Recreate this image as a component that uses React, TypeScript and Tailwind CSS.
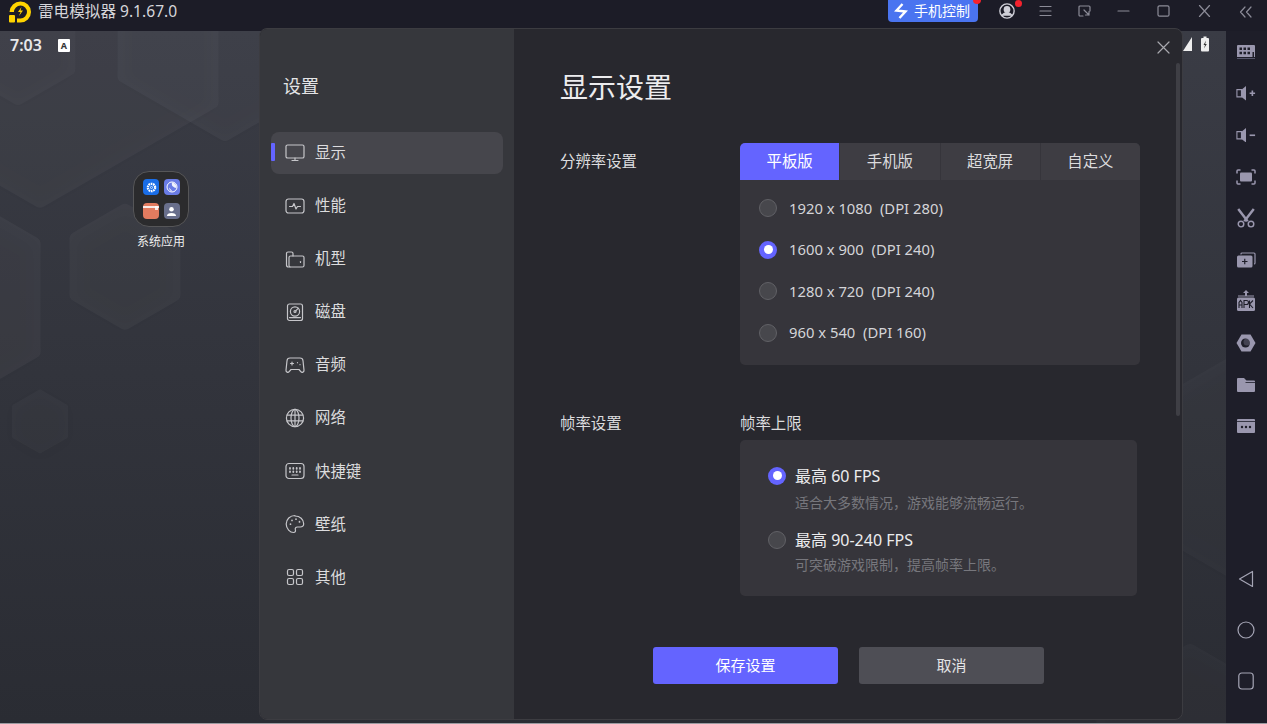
import React from "react";

const S = { fill: "none", stroke: "currentColor", strokeWidth: 1.2, strokeLinecap: "round", strokeLinejoin: "round" } as const;

const menuIcons: Record<string, React.ReactNode> = {
  monitor: (<g><rect x="1" y="2" width="18" height="13" rx="1.6" /><path d="M7 17.500h6M10 15v2.500" /></g>),
  perf: (<g><rect x="1" y="3" width="18" height="14" rx="2.500" /><path d="M4.500 10.500h3l1.500-3 2 5.500 1.500-2.500h3" /></g>),
  model: (<g><path d="M1.500 16V4.500A1.500 1.500 0 0 1 3 3h3.500A1.500 1.500 0 0 1 8 4.500V7" /><rect x="4" y="7" width="15" height="11" rx="1.500" /><path d="M1.500 16A2 2 0 0 0 3.500 18H5" /><path d="M15.500 12.500v1" /></g>),
  disk: (<g><rect x="2.500" y="2" width="15" height="16.500" rx="2" /><circle cx="10" cy="9.500" r="4.600" /><circle cx="10" cy="9.500" r="1" /><path d="M10.700 8.800l2.500-2.500M4.500 15.600h11" /></g>),
  game: (<g><path d="M5 3h10a3 3 0 0 1 3 2.700l1 9.500c.2 1.900-2 2.800-3.200 1.400L14 14.500H6l-1.800 2.100C3 18 .8 17.100 1 15.200l1-9.500A3 3 0 0 1 5 3z" /><path d="M5.500 8.500h3M7 7v3M12.500 7.500v.2M15 9.500v.2" /></g>),
  globe: (<g><circle cx="10" cy="10" r="8.600" /><ellipse cx="10" cy="10" rx="4" ry="8.600" /><path d="M2 7.200h16M2 12.800h16M10 1.400v17.200" /></g>),
  keys: (<g><rect x="1" y="2.500" width="18" height="15" rx="3" /><path d="M5 7v.8M8.300 7v.8M11.700 7v.8M15 7v.8M5 10.300v.8M8.300 10.300v.8M11.700 10.300v.8M15 10.300v.8" strokeWidth="1.800" /><path d="M7 14h6" /></g>),
  palette: (<g><path d="M10 1.500c-5 0-8.800 3.800-8.800 8.500 0 4.800 3.900 8.500 7.300 8.500 1.800 0 2.300-1.400 1.900-2.600-.6-1.600.3-2.900 2-2.900h2.800c2 0 3.500-1.200 3.500-3.200 0-4.400-3.800-7.800-8.700-7.800z" /><path d="M5.500 10v.2M7 6.300v.2M11 5v.2M14.500 7.700v.2" strokeWidth="1.700" /></g>),
  grid: (<g><rect x="2.500" y="2.500" width="6" height="6" rx="1.500" /><rect x="11.500" y="2.500" width="6" height="6" rx="1.500" /><rect x="2.500" y="11.500" width="6" height="6" rx="1.500" /><rect x="11.500" y="11.500" width="6" height="6" rx="1.500" /></g>),
};

const menu = [
  ["monitor", "显示"], ["perf", "性能"], ["model", "机型"], ["disk", "磁盘"], ["game", "音频"],
  ["globe", "网络"], ["keys", "快捷键"], ["palette", "壁纸"], ["grid", "其他"],
];

function Radio({ on }: { on?: boolean }) {
  return on ? (
    <span className="flex h-[18px] w-[18px] shrink-0 items-center justify-center rounded-full bg-[#6464ff]">
      <span className="h-[9px] w-[9px] rounded-full bg-white" />
    </span>
  ) : (
    <span className="h-[18px] w-[18px] shrink-0 rounded-full border border-[#616166] bg-[#47474c]" />
  );
}

function Hexes() {
  const hex = (cx: number, cy: number, r: number) => {
    const h = r * 0.866;
    return `${cx},${cy - r} ${cx + h},${cy - r / 2} ${cx + h},${cy + r / 2} ${cx},${cy + r} ${cx - h},${cy + r / 2} ${cx - h},${cy - r / 2}`;
  };
  const items: [number, number, number, number][] = [
    [225, 18, 116, 0.035],
    [40, 3, 198, 0.03],
    [18, 40, 58, 0.025],
    [-60, 298, 108, 0.035],
    [125, 267, 56, 0.03],
    [40, 422, 30, 0.025],
    [1260, 468, 120, 0.02],
    [1190, 752, 100, 0.02],
  ];
  return (
    <svg className="absolute inset-0 h-full w-full" viewBox="0 0 1226 693" preserveAspectRatio="none" aria-hidden>
      <defs>
        <filter id="soft" x="-30%" y="-30%" width="160%" height="160%"><feGaussianBlur stdDeviation="6" /></filter>
      </defs>
      {items.map(([cx, cy, r, o], i) => (
        <g key={i}>
          <polygon points={hex(cx, cy - 31 + 3, r)} fill="#000000" opacity={0.035} filter="url(#soft)" />
          <g opacity={o}>
            <polygon points={hex(cx, cy - 31, r)} fill="#ffffff" stroke="#ffffff" strokeWidth={r > 40 ? 14 : 4} strokeLinejoin="round" />
          </g>
        </g>
      ))}
    </svg>
  );
}

function TitleBar() {
  return (
    <header className="flex h-[31px] shrink-0 items-start bg-[#1c1c27] text-[#d5d5da]">
      <svg className="ml-[8px] mt-[1px] h-[22px] w-[24px] shrink-0" viewBox="0 0 24 22">
        <path d="M12.500 0.500a10.500 10.500 0 0 1 0 21H9v-4h3.500a6.500 6.500 0 1 0-6.500-6.500H1.500A11 11 0 0 1 12.500 0.500z" fill="#ffd400" />
        <rect x="1" y="14" width="6" height="7.500" rx="1" fill="#ffd400" />
        <path d="M13.500 6l-3.500 5h2.500l-1.500 4 4-5.500h-2.500z" fill="#ffd400" />
      </svg>
      <span className="ml-[6px] text-[15.600px] leading-[22px]">雷电模拟器 9.1.67.0</span>
      <div className="relative ml-auto flex h-[22px] w-[90px] items-center rounded-b-[4px] bg-[#4a74f0] pl-[6px] text-[14px] text-white">
        <svg className="h-[16px] w-[14px]" viewBox="0 0 14 16" fill="none" stroke="#fff" strokeWidth="2.400"><path d="M8.500 1L2.500 7.500l9 1L5.500 15" /></svg>
        <span className="ml-[6px] leading-[22px]">手机控制</span>
        <span className="absolute right-[-3px] top-[-4px] h-[8px] w-[8px] rounded-full bg-[#f5222d]" />
      </div>
      <div className="relative ml-[21px] mt-[3px] h-[16px] w-[16px]">
        <svg className="h-[16px] w-[16px]" viewBox="0 0 15 15" fill="none" stroke="#d0d0d8" strokeWidth="1.300"><circle cx="7.500" cy="7.500" r="6.700" /><circle cx="7.500" cy="6" r="2.500" fill="#d0d0d8" /><path d="M2.800 12c1-2 2.600-3 4.700-3s3.700 1 4.700 3" fill="#d0d0d8" /></svg>
        <span className="absolute right-[-7px] top-[-3px] h-[7px] w-[7px] rounded-full bg-[#f5222d]" />
      </div>
      <svg className="ml-[24px] mt-[5px] h-[12px] w-[13px] text-[#8c8c98]" viewBox="0 0 13 12" {...S}><path d="M1 1.500h11M1 6h11M1 10.500h11" /></svg>
      <svg className="ml-[26px] mt-[5px] h-[12px] w-[13px] text-[#8c8c98]" viewBox="0 0 13 12" {...S}><path d="M5 11H2a1 1 0 0 1-1-1V2a1 1 0 0 1 1-1h9a1 1 0 0 1 1 1v4M6 5l5 5M11 6.500V10H7.500" /></svg>
      <svg className="ml-[26px] mt-[5px] h-[12px] w-[13px] text-[#8c8c98]" viewBox="0 0 13 12" {...S}><path d="M1 6h11" /></svg>
      <svg className="ml-[27px] mt-[5px] h-[12px] w-[13px] text-[#8c8c98]" viewBox="0 0 13 12" {...S}><rect x="1" y="0.800" width="11" height="10.400" rx="1.500" /></svg>
      <svg className="ml-[28px] mt-[5px] h-[12px] w-[13px] text-[#8c8c98]" viewBox="0 0 13 12" {...S}><path d="M1.500 0.500l10 11M11.500 0.500l-10 11" /></svg>
      <svg className="ml-[28px] mr-[15px] mt-[6px] h-[12px] w-[13px] text-[#8c8c98]" viewBox="0 0 13 12" {...S}><path d="M6 1L1.500 6 6 11M12 1L7.500 6 12 11" /></svg>
    </header>
  );
}

function RightBar() {
  const c = "#9a97ae";
  const b = "#1e1e29";
  const icons = [
    <svg viewBox="0 0 20 16" key="k"><path d="M2 1h16a1 1 0 0 1 1 1v11H1V2a1 1 0 0 1 1-1z" fill={c} /><path d="M3.500 3.500h2.500v2.500H3.500zM7.500 3.500h2.500v2.500H7.500zM11.500 3.500h2.500v2.500h-2.500zM3.500 7.800h2.500v2.500H3.500zM7.500 7.800h2.500v2.500H7.500zM11.500 7.800h2.500v2.500h-2.500z" fill={b} /><path d="M16.500 8h1.500v5h-1.500z" fill={b} /><path d="M1 14h18v1H1z" fill="#55556a" /></svg>,
    <svg viewBox="0 0 22 16" key="v+"><path d="M1 4h5v8H1z" fill="none" stroke={c} strokeWidth="1.200" /><path d="M6 4l5-4v16l-5-4z" fill={c} /><path d="M15 8h6M18 5v6" stroke={c} strokeWidth="1.800" /></svg>,
    <svg viewBox="0 0 22 16" key="v-"><path d="M1 4h5v8H1z" fill="none" stroke={c} strokeWidth="1.200" /><path d="M6 4l5-4v16l-5-4z" fill={c} /><path d="M15 8h6" stroke={c} strokeWidth="1.800" /></svg>,
    <svg viewBox="0 0 20 16" key="s"><rect x="4" y="3.500" width="12" height="9" rx="1" fill={c} /><path d="M1 4.500V2a1 1 0 0 1 1-1h2.500M15.500 1H18a1 1 0 0 1 1 1v2.500M19 11.500V14a1 1 0 0 1-1 1h-2.500M4.500 15H2a1 1 0 0 1-1-1v-2.500" fill="none" stroke={c} strokeWidth="1.500" /></svg>,
    <svg viewBox="0 0 18 18" key="c"><path d="M2 1l8.500 11M16 1L7.500 12" stroke={c} strokeWidth="2.200" fill="none" /><circle cx="4.500" cy="14.500" r="2.500" fill="none" stroke={c} strokeWidth="1.300" /><circle cx="13.500" cy="14.500" r="2.500" fill="none" stroke={c} strokeWidth="1.300" /></svg>,
    <svg viewBox="0 0 20 16" key="a"><path d="M5 2.500V2a1 1 0 0 1 1-1h12a1 1 0 0 1 1 1v9a1 1 0 0 1-1 1" fill="none" stroke={c} strokeWidth="1.200" /><rect x="1" y="3.500" width="15.500" height="12" rx="1.500" fill={c} /><path d="M6 9.500h5.500M8.750 6.800v5.400" stroke={b} strokeWidth="1.200" /></svg>,
    <svg viewBox="0 0 20 22" key="apk"><path d="M10 0l3 3h-2v3H9V3H7z" fill={c} /><path d="M2 6h16" stroke={c} strokeWidth="1" /><rect x="1" y="7.500" width="18" height="13.500" rx="1.500" fill={c} /><path d="M3 18v-5.500l1.500-2 1.500 2V18M3 15h3M8 18v-7.500h2.500a1.500 1.500 0 0 1 0 4H8M13.500 10.500V18M17 10.500l-3.500 3.500 3.500 4" fill="none" stroke={b} strokeWidth="1.100" /></svg>,
    <svg viewBox="0 0 20 18" key="hex"><path d="M5.500 0.500h9L19.500 9l-5 8.500h-9L0.500 9z" fill={c} /><circle cx="9.500" cy="9" r="4.500" fill={b} /><circle cx="11" cy="8" r="3.500" fill={c} opacity="0.300" /></svg>,
    <svg viewBox="0 0 20 16" key="f"><path d="M1 2a1 1 0 0 1 1-1h6l2.500 2.500H18a1 1 0 0 1 1 1V14a1 1 0 0 1-1 1H2a1 1 0 0 1-1-1z" fill={c} /><path d="M9.500 5.500H19" stroke={b} strokeWidth="0.800" /></svg>,
    <svg viewBox="0 0 20 16" key="m"><rect x="1" y="1" width="18" height="14" rx="1" fill={c} /><path d="M1 3.500h18" stroke={b} strokeWidth="0.800" /><circle cx="6" cy="9" r="1.200" fill={b} /><circle cx="10" cy="9" r="1.200" fill={b} /><circle cx="14" cy="9" r="1.200" fill={b} /></svg>,
  ];
  return (
    <aside className="flex w-[41px] shrink-0 flex-col items-center bg-[#1e1e29]">
      <div className="flex flex-col items-center pr-[1px]">
        {icons.map((ic, i) => (
          <div key={i} className="flex h-[41.600px] w-[22px] items-center justify-center [&>svg]:w-[20px]">{ic}</div>
        ))}
      </div>
      <div className="mt-auto mb-[33px] flex flex-col items-center gap-[33px] pr-[2px] text-[#a5a5b5]">
        <svg className="h-[18px] w-[16px]" viewBox="0 0 16 18" {...S}><path d="M14.500 1.500v15L1.500 9z" /></svg>
        <svg className="h-[18px] w-[18px]" viewBox="0 0 18 18" {...S}><circle cx="9" cy="9" r="8" /></svg>
        <svg className="h-[18px] w-[16px]" viewBox="0 0 16 18" {...S}><rect x="0.800" y="1" width="14.400" height="16" rx="3" /></svg>
      </div>
    </aside>
  );
}

function Dialog() {
  const tabs = ["平板版", "手机版", "超宽屏", "自定义"];
  const res = ["1920 x 1080\u00a0\u00a0(DPI 280)", "1600 x 900\u00a0\u00a0(DPI 240)", "1280 x 720\u00a0\u00a0(DPI 240)", "960 x 540\u00a0\u00a0(DPI 160)"];
  return (
    <div className="absolute left-[259px] top-[-3px] flex h-[692px] w-[924px] overflow-hidden rounded-[8px] border border-[#3c3c41] bg-[#28282e]">
      <aside className="w-[254px] shrink-0 bg-[#36373c] pl-[11px] pr-[11px] pt-[43px]">
        <h2 className="ml-[12px] h-[28px] text-[18px] leading-[28px] text-[#e4e4e6]">设置</h2>
        <nav className="mt-[32px] flex flex-col gap-[11.100px]">
          {menu.map(([ic, label], i) => (
            <div key={label} className={`relative flex h-[42px] items-center pb-[1px] pl-[14px] text-[15.400px] text-[#dcdcde] ${i === 0 ? "rounded-[8px] bg-[#46464c]" : ""}`}>
              {i === 0 && <span className="absolute left-0 top-[11px] h-[18px] w-[4px] rounded-[1px] bg-[#6464ff]" />}
              <svg className="h-[20px] w-[20px] text-[#c6c6ca]" viewBox="0 0 20 20" {...S}>{menuIcons[ic]}</svg>
              <span className="ml-[10px]">{label}</span>
            </div>
          ))}
        </nav>
      </aside>
      <main className="relative flex-1 pl-[46px] pt-[38px]">
        <h1 className="h-[40px] text-[28px] leading-[40px] text-[#ececee]">显示设置</h1>
        <section className="mt-[36px] flex">
          <div className="w-[180px] text-[15.400px] leading-[37px] text-[#dcdcde]">分辨率设置</div>
          <div className="w-[400px] overflow-hidden rounded-[5px] bg-[#36353b]">
            <div className="flex h-[37px] gap-[1px]">
              {tabs.map((t, i) => (
                <div key={t} className={`flex flex-1 items-center justify-center text-[15.400px] ${i === 0 ? "bg-[#6464ff] text-white" : "bg-[#3e3d43] text-[#dcdcde]"}`}>{t}</div>
              ))}
            </div>
            <div className="flex flex-col gap-[23.500px] px-[19px] pb-[23px] pt-[19px]">
              {res.map((r, i) => (
                <div key={r} className="flex h-[18px] items-center gap-[12px] text-[14.800px] text-[#d4d4d8]">
                  <Radio on={i === 1} />
                  <span>{r}</span>
                </div>
              ))}
            </div>
          </div>
        </section>
        <section className="mt-[48px] flex">
          <div className="w-[180px] text-[15.400px] leading-[22px] text-[#dcdcde]">帧率设置</div>
          <div className="w-[397px]">
            <div className="text-[15.400px] leading-[22px] text-[#dcdcde]">帧率上限</div>
            <div className="mt-[5px] h-[156px] rounded-[5px] bg-[#36353b] pl-[28px] pt-[26px]">
              <div className="flex h-[20px] items-center gap-[9px] text-[16px] text-[#ececee]"><Radio on /><span>最高 60 FPS</span></div>
              <p className="ml-[27px] mt-[7px] text-[14px] leading-[20px] text-[#77777d]">{"适合大多数情况\uFF0C游戏能够流畅运行。"}</p>
              <div className="mt-[17px] flex h-[20px] items-center gap-[9px] text-[16px] text-[#ececee]"><Radio /><span>最高 90-240 FPS</span></div>
              <p className="ml-[27px] mt-[5px] text-[14px] leading-[20px] text-[#77777d]">{"可突破游戏限制\uFF0C提高帧率上限。"}</p>
            </div>
          </div>
        </section>
        <div className="ml-[93px] mt-[51px] flex gap-[21px]">
          <button className="h-[37px] w-[185px] rounded-[3px] bg-[#6464ff] text-[15px] text-white">保存设置</button>
          <button className="h-[37px] w-[185px] rounded-[3px] bg-[#4e4e55] text-[15px] text-[#e4e4e6]">取消</button>
        </div>
        <span className="absolute right-[2px] top-[34px] h-[353px] w-[4px] rounded-full bg-[#3f3f45]" />
        <svg className="absolute right-[12px] top-[12px] h-[13px] w-[13px] text-[#a8a8ae]" viewBox="0 0 13 13" {...S}><path d="M1 1l11 11M12 1L1 12" /></svg>
      </main>
    </div>
  );
}

export default function App() {
  return (
    <div className="flex h-[724px] w-[1267px] flex-col overflow-hidden bg-[#1c1c27] font-['Noto_Sans','Noto_Sans_CJK_SC',sans-serif]">
      <TitleBar />
      <div className="flex flex-1">
        <div className="relative flex-1 bg-linear-to-b from-[#3a3c45] to-[#2a2c33]">
          <Hexes />
          <div className="relative flex items-center pl-[10px] pt-[6px] text-white">
            <span className="text-[16px] font-semibold leading-[16px] text-[#e8e8ea]">7:03</span>
            <span className="ml-[16px] flex h-[13px] w-[12px] items-center justify-center rounded-[1px] bg-white text-[9px] font-bold leading-none text-[#333]">A</span>
          </div>
          <div className="absolute left-[133px] top-[140px] flex w-[56px] flex-col items-center">
            <div className="grid h-[56px] w-[56px] grid-cols-2 content-center justify-center gap-x-[5px] gap-y-[8px] rounded-[16px] border border-[#565658] bg-[#2b2b2d] px-[9px]">
              <span className="flex h-[16px] w-[16px] items-center justify-center rounded-[4px] bg-[#1a6ee8]">
                <svg className="h-[11px] w-[11px]" viewBox="0 0 12 12"><circle cx="6" cy="6" r="4" fill="none" stroke="#fff" strokeWidth="2.500" strokeDasharray="1.800 0.700" /><circle cx="6" cy="6" r="1.200" fill="none" stroke="#fff" strokeWidth="0.800" /></svg>
              </span>
              <span className="flex h-[16px] w-[16px] items-center justify-center rounded-[4px] bg-[#6a7ce6]">
                <svg className="h-[12px] w-[12px]" viewBox="0 0 12 12"><circle cx="6" cy="6" r="5" fill="none" stroke="#fff" strokeWidth="1" /><path d="M6 1.500a4.500 4.500 0 0 1 4.300 5.500C8.500 7 8 6 7 5.500 6 5 5.500 3 6 1.500zM3 6.500L6.500 10.500A4.500 4.500 0 0 1 3 6.500z" fill="#fff" opacity="0.900" /></svg>
              </span>
              <span className="relative h-[16px] w-[16px] overflow-hidden rounded-[4px] bg-[#e27b5f]">
                <span className="absolute left-0 top-[3px] h-[2px] w-[16px] bg-white/85" />
                <span className="absolute right-[1px] top-[3px] h-[4px] w-[3px] bg-white/85" />
              </span>
              <span className="flex h-[16px] w-[16px] items-center justify-center rounded-[4px] bg-[#696f8c]">
                <svg className="h-[11px] w-[11px]" viewBox="0 0 12 12" fill="#fff"><circle cx="6" cy="3.500" r="2.500" /><path d="M1 11c0-2.500 2-3.500 5-3.500s5 1 5 3.500z" /></svg>
              </span>
            </div>
            <span className="mt-[6px] whitespace-nowrap text-[12px] leading-[18px] text-[#eeeeee]">系统应用</span>
          </div>
          <Dialog />
          <div className="absolute left-[1183px] top-[5px] flex items-center text-white">
            <svg className="h-[14px] w-[9px]" viewBox="0 0 9 14"><path d="M9 0v14H0z" fill="#eee" /></svg>
            <svg className="ml-[9px] h-[16px] w-[8px]" viewBox="0 0 8 15"><rect x="0" y="1.500" width="8" height="13.500" rx="1" fill="#eee" /><rect x="2.500" y="0" width="3" height="2" fill="#eee" /><path d="M5 4L2.500 8.500H4L3 12l2.800-4.500H4.200z" fill="#333" /></svg>
          </div>
        </div>
        <RightBar />
      </div>
      <div className="h-[1px] shrink-0 bg-[#9a9aa0]" />
    </div>
  );
}
